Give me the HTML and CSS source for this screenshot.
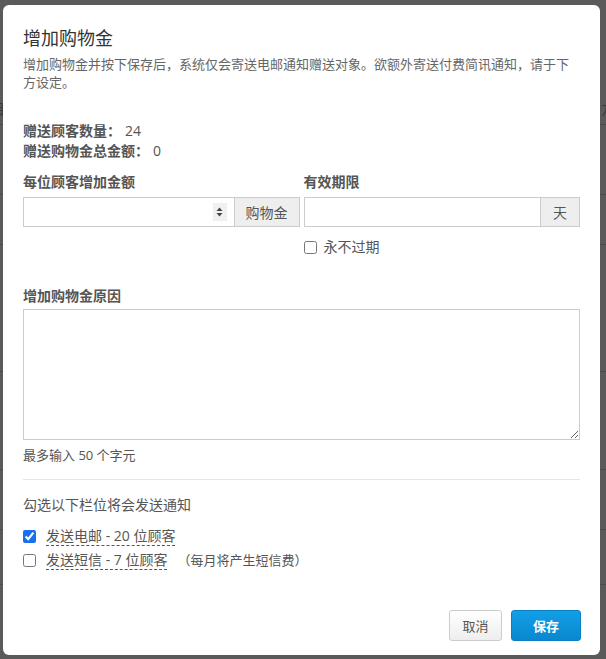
FILE: index.html
```html
<!DOCTYPE html>
<html lang="zh-CN">
<head>
<meta charset="utf-8">
<title>增加购物金</title>
<link rel="stylesheet" href="styles.css">
</head>
<body>
<div class="page">
  <div class="bg-row r1"><span class="frag-l">目</span><span class="frag-r">方</span></div>
  <div class="bg-row r2"></div>
  <div class="bg-row r3"></div>
  <div class="bg-row r4"></div>
  <div class="bg-row r5"></div>
  <div class="bg-row r6"></div>
  <div class="bg-row r7"></div>
</div>

<div class="modal">
  <h1 class="title">增加购物金</h1>
  <p class="desc">增加购物金并按下保存后，系统仅会寄送电邮通知赠送对象。欲额外寄送付费简讯通知，请于下方设定。</p>

  <div class="stats">
    <div><span class="stat-label">赠送顾客数量：</span><span class="stat-val">24</span></div>
    <div><span class="stat-label">赠送购物金总金额：</span><span class="stat-val">0</span></div>
  </div>

  <div class="two-col">
    <div class="col">
      <label class="label">每位顾客增加金额</label>
      <div class="input-group">
        <div class="field">
          <input class="text-input" type="text">
          <span class="spinner">
            <svg width="9" height="14" viewBox="0 0 9 14"><path d="M4.5 2.5 L7.5 6 L1.5 6 Z" fill="#444"/><path d="M1.5 8 L7.5 8 L4.5 11.5 Z" fill="#444"/></svg>
          </span>
        </div>
        <span class="addon addon-wide">购物金</span>
      </div>
    </div>
    <div class="col">
      <label class="label">有效期限</label>
      <div class="input-group">
        <div class="field">
          <input class="text-input" type="text">
        </div>
        <span class="addon addon-narrow">天</span>
      </div>
      <label class="check-row never">
        <input type="checkbox" class="cb">
        <span>永不过期</span>
      </label>
    </div>
  </div>

  <label class="label reason-label">增加购物金原因</label>
  <textarea class="reason"></textarea>
  <div class="hint">最多输入 50 个字元</div>

  <hr class="divider">

  <div class="notify-title">勾选以下栏位将会发送通知</div>
  <div class="notify-list">
    <label class="check-row">
      <input type="checkbox" class="cb" checked>
      <span class="dashed">发送电邮 - 20 位顾客</span>
    </label>
    <label class="check-row">
      <input type="checkbox" class="cb">
      <span class="dashed">发送短信 - 7 位顾客</span>
      <span class="note">（每月将产生短信费）</span>
    </label>
  </div>

  <div class="footer">
    <button class="btn btn-default">取消</button>
    <button class="btn btn-primary">保存</button>
  </div>
</div>
</body>
</html>
```

FILE: styles.css
```css
* { box-sizing: border-box; }

html, body {
  margin: 0;
  padding: 0;
}

body {
  width: 606px;
  height: 659px;
  overflow: hidden;
  background: #5a5a5a;
  font-family: "Open Sans", "Noto Sans CJK SC", sans-serif;
  font-size: 13px;
  color: #555;
  position: relative;
}

/* faint page behind the overlay */
.page {
  height: 659px;
  display: flex;
  flex-direction: column;
}
.bg-row {
  border-bottom: 1px solid #4c4c4c;
  position: relative;
}
.r1 { height: 125px; }
.r2 { height: 70px; }
.r3 { height: 50px; }
.r4 { height: 127px; }
.r5 { height: 98px; }
.r6 { height: 60px; }
.r7 { height: 55px; }
.frag-l, .frag-r {
  position: absolute;
  top: 98px;
  color: #3a3a3a;
  font-size: 14px;
}
.frag-l { left: -9px; }
.frag-r { right: -9px; }

.modal {
  position: absolute;
  left: 3px;
  top: 5px;
  width: 597px;
  height: 650px;
  background: #fff;
  border-radius: 6px;
  padding: 21px 20px 14px;
  display: flex;
  flex-direction: column;
}

.title {
  margin: 0;
  font-size: 18px;
  line-height: 24px;
  font-weight: normal;
  color: #333;
}

.desc {
  margin: 5px 0 0;
  line-height: 18px;
  color: #666;
}

.stats {
  margin-top: 30px;
  font-size: 14px;
  line-height: 20px;
  color: #555;
}
.stat-label { font-weight: 600; }
.stat-val { margin-left: 4px; }

.two-col {
  margin-top: 11px;
  display: grid;
  grid-template-columns: 1fr 1fr;
  column-gap: 4px;
}

.label {
  display: block;
  font-size: 14px;
  font-weight: 600;
  line-height: 20px;
  color: #555;
}

.input-group {
  margin-top: 5px;
  display: flex;
  height: 30px;
}

.field {
  flex: 1;
  display: flex;
  align-items: center;
  border: 1px solid #ccc;
  border-right: none;
  background: #fff;
  min-width: 0;
}

.text-input {
  flex: 1;
  min-width: 0;
  height: 100%;
  border: none;
  outline: none;
  padding: 0 8px;
  font: inherit;
  background: transparent;
}

.spinner {
  width: 14px;
  height: 18px;
  margin-right: 7px;
  background: #f0f0f0;
  display: flex;
  align-items: center;
  justify-content: center;
}

.addon {
  border: 1px solid #ccc;
  background: #eee;
  color: #555;
  font-size: 14px;
  display: flex;
  align-items: center;
  justify-content: center;
}
.addon-wide { width: 66px; }
.addon-narrow { width: 40px; }

.check-row {
  display: flex;
  align-items: center;
  gap: 10px;
  font-size: 14px;
  line-height: 20px;
  color: #555;
}
.never {
  margin-top: 10px;
  padding-left: 0;
  gap: 7px;
}

.cb {
  margin: 0;
  width: 13px;
  height: 13px;
  accent-color: #1a6ff0;
}

.reason-label {
  margin-top: 29px;
}

.reason {
  display: block;
  margin-top: 3px;
  width: 100%;
  height: 131px;
  border: 1px solid #ccc;
  resize: vertical;
  font: inherit;
  padding: 6px 8px;
}

.hint {
  margin-top: 5px;
  line-height: 20px;
  color: #555;
}

.divider {
  margin: 14px 0 0;
  border: none;
  border-top: 1px solid #e5e5e5;
  height: 0;
}

.notify-title {
  margin-top: 15px;
  font-size: 14px;
  line-height: 20px;
  color: #555;
}

.notify-list {
  margin-top: 11px;
  display: flex;
  flex-direction: column;
  gap: 4px;
}

.dashed {
  border-bottom: 1px dashed #555;
  line-height: 19px;
}

.note {
  margin-left: 0;
  font-size: 13px;
}

.footer {
  margin-top: auto;
  display: flex;
  justify-content: flex-end;
  gap: 9px;
  margin-right: -1px;
}

.btn {
  height: 31px;
  font-family: inherit;
  font-size: 13px;
  border-radius: 3px;
  cursor: pointer;
}
.btn-default {
  width: 53px;
  border: 1px solid #ccc;
  background: linear-gradient(#fff, #eee);
  color: #555;
}
.btn-primary {
  width: 70px;
  border: 1px solid #0b7fc4;
  background: linear-gradient(#119fe6, #0a87cf);
  color: #fff;
  font-weight: bold;
}
```
